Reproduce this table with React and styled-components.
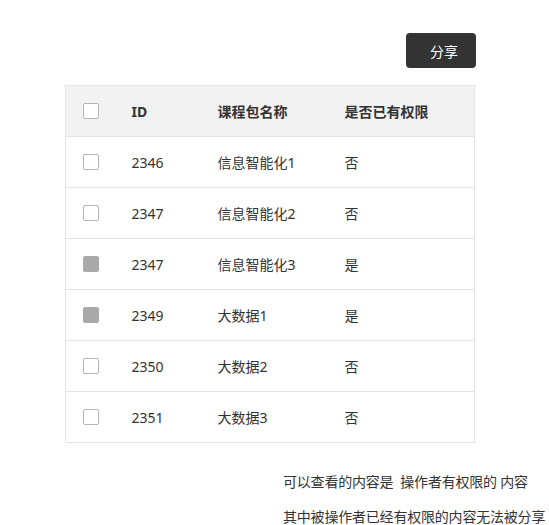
import React from 'react'
import styled, { createGlobalStyle } from 'styled-components'

const rows = [
  { id: 2346, name: '信息智能化1', owned: false },
  { id: 2347, name: '信息智能化2', owned: false },
  { id: 2347, name: '信息智能化3', owned: true },
  { id: 2349, name: '大数据1', owned: true },
  { id: 2350, name: '大数据2', owned: false },
  { id: 2351, name: '大数据3', owned: false },
]

export default () => {
  return (
    <Page>
      <GlobalStyle />
      <Toolbar>
        <ShareButton>分享</ShareButton>
      </Toolbar>
      <Table>
        <colgroup>
          <col style={{ width: 66 }} />
          <col style={{ width: 86 }} />
          <col style={{ width: 127 }} />
          <col />
        </colgroup>
        <thead>
          <HeadRow>
            <CheckCell>
              <Checkbox />
            </CheckCell>
            <HeadCell>ID</HeadCell>
            <HeadCell>课程包名称</HeadCell>
            <HeadCell>是否已有权限</HeadCell>
          </HeadRow>
        </thead>
        <tbody>
          {rows.map((row, i) => (
            <Row key={i}>
              <CheckCell>
                <Checkbox disabled={row.owned} />
              </CheckCell>
              <Cell>{row.id}</Cell>
              <Cell>{row.name}</Cell>
              <Cell>{row.owned ? '是' : '否'}</Cell>
            </Row>
          ))}
        </tbody>
      </Table>
      <Notes>
        <Note>可以查看的内容是&nbsp;&nbsp;操作者有权限的 内容</Note>
        <Note>其中被操作者已经有权限的内容无法被分享</Note>
      </Notes>
    </Page>
  )
}

const GlobalStyle = createGlobalStyle`
  body {
    margin: 0;
    background: #fff;
    font-family: "Noto Sans", "Noto Sans CJK SC", sans-serif;
    color: #333;
  }
`

const Page = styled.div`
  width: 410px;
  padding: 33px 0 0 65px;
`

const Toolbar = styled.div`
  display: flex;
  justify-content: flex-end;
  margin-right: -1px;
`

const ShareButton = styled.button`
  width: 70px;
  height: 35px;
  border: none;
  border-radius: 4px;
  background: #333;
  color: #fff;
  font-family: "Noto Sans CJK SC", sans-serif;
  font-size: 14px;
  padding: 0 0 0 6px;
`

const Table = styled.table`
  margin-top: 17px;
  width: 410px;
  table-layout: fixed;
  border-collapse: collapse;
  border: 1px solid #e4e4e4;
  font-size: 14px;
`

const HeadRow = styled.tr`
  height: 51px;
  background: #f2f2f2;
  border-bottom: 1px solid #e4e4e4;
`

const Row = styled.tr`
  height: 51px;
  border-bottom: 1px solid #e4e4e4;
`

const Cell = styled.td`
  padding: 0;
  color: #333;
`

const HeadCell = styled.th`
  padding: 0;
  text-align: left;
  font-weight: bold;
  color: #333;
`

const CheckCell = styled.td`
  padding: 0 0 0 17px;
  vertical-align: middle;
`

const Checkbox = styled.span`
  display: block;
  width: 16px;
  height: 16px;
  box-sizing: border-box;
  border-radius: 2px;
  border: 1px solid ${(p) => (p.disabled ? '#aaa' : '#b5b5b5')};
  background: ${(p) => (p.disabled ? '#aaa' : '#fff')};
`

const Notes = styled.div`
  margin: 31px 0 0 218px;
  width: 262px;
  display: flex;
  flex-direction: column;
  gap: 19px;
`

const Note = styled.div`
  font-size: 14px;
  line-height: 16px;
  letter-spacing: -0.2px;
  white-space: nowrap;
  color: #333;
`
